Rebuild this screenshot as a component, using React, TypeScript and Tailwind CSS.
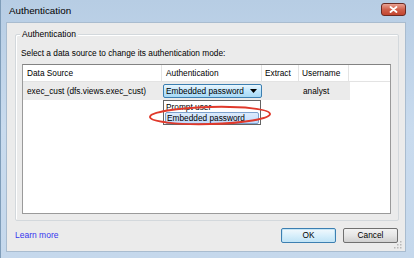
import React from "react";

const font = { fontFamily: '"Liberation Sans", Arial, sans-serif' };

function Grip() {
  return (
    <svg width="8" height="8" viewBox="0 0 8 8" className="absolute right-[3px] bottom-[2px]">
      {[
        [6, 6], [6, 3], [3, 6], [6, 0], [3, 3], [0, 6],
      ].map(([x, y], i) => (
        <rect key={i} x={x} y={y} width="1.5" height="1.5" fill="#b8b8b8" />
      ))}
    </svg>
  );
}

export default function App() {
  return (
    <div className="w-[414px] h-[258px] bg-[#dfe9f3] overflow-hidden relative whitespace-nowrap" style={font}>
      {/* window frame */}
      <div className="w-[414px] h-[258px] flex flex-col bg-gradient-to-b from-[#b7cde4] via-[#c9dbee] to-[#c5d8ec] border-l border-[#7f9db9]">
        {/* title bar */}
        <div className="h-[22px] flex items-center justify-between pl-[8px] pr-[8px]">
          <span className="text-[9.8px] text-black">Authentication</span>
          <div className="w-[25px] h-[13px] mt-[-4px] rounded-[3px] border border-[#6b2a22] bg-gradient-to-b from-[#e8a193] via-[#d0604b] to-[#c2452f] flex items-center justify-center">
            <svg width="9" height="7" viewBox="0 0 9 7">
              <path d="M1.5 1 L7.5 6 M7.5 1 L1.5 6" stroke="#fff" strokeWidth="1.8" strokeLinecap="round" />
            </svg>
          </div>
        </div>
        {/* client area */}
        <div className="relative ml-[5px] mr-[8px] h-[230px] bg-[#ebebeb] border border-[#a9bccf] flex flex-col">
          {/* group box */}
          <div className="relative mt-[11px] ml-[8px] mr-[6px] h-[187px] border border-[#d3d8dc] rounded-[2px] shadow-[inset_1px_1px_0_#fff]">
            <span className="absolute left-[4px] top-[-7px] px-[2px] bg-[#ebebeb] text-[8.5px] leading-[12px] text-black">
              Authentication
            </span>
            <div className="pl-[5px] pt-[12px] text-[8.3px] leading-[12px] text-black">
              Select a data source to change its authentication mode:
            </div>
            {/* table */}
            <div className="relative mt-[5px] ml-[6px] mr-[7px] h-[150px] bg-white border border-[#9a9a9a] border-t-[#828282]">
              <div className="flex h-[17px] text-[8.3px] leading-[17px] text-black border-b border-[#e3e3e3]">
                <div className="w-[139px] pl-[4px] border-r border-[#e3e3e3]">Data Source</div>
                <div className="w-[100px] pl-[4px] border-r border-[#e3e3e3]">Authentication</div>
                <div className="w-[37px] pl-[3px] border-r border-[#e3e3e3]">Extract</div>
                <div className="w-[50px] pl-[3px] border-r border-[#e3e3e3]">Username</div>
              </div>
              <div className="flex h-[18px] w-[327px] bg-[#ebebeb] text-[8.3px] leading-[18px] text-black">
                <div className="w-[140px] pl-[4px]">exec_cust (dfs.views.exec_cust)</div>
                <div className="w-[100px] flex items-center">
                  <div className="w-[99px] h-[14px] flex items-center justify-between pl-[2px] pr-[4px] border border-[#3c7fb1] rounded-[2px] bg-gradient-to-b from-[#eaf6fd] via-[#bee6fd] to-[#a7d9f5] leading-[12px]">
                    <span>Embedded password</span>
                    <svg width="7" height="4" viewBox="0 0 7 4">
                      <path d="M0 0 H7 L3.5 4 Z" fill="#000" />
                    </svg>
                  </div>
                </div>
                <div className="w-[37px]" />
                <div className="w-[50px] pl-[3px]">analyst</div>
              </div>
              {/* dropdown list */}
              <div className="absolute left-[140px] top-[35px] w-[98px] h-[25px] bg-white border border-[#646464] text-[8.3px] leading-[11px] text-black">
                <div className="pl-[2px] pt-[1px] h-[11px]">Prompt user</div>
                <div className="mx-[1px] pl-[1px] h-[12px] border border-[#7da2ce] rounded-[2px] bg-gradient-to-b from-[#dcebfc] to-[#c1dbfc] leading-[10px]">
                  Embedded password
                </div>
              </div>
            </div>
          </div>
          {/* footer */}
          <div className="flex items-center justify-between mt-[7px] ml-[8px] mr-[7px]">
            <span className="text-[8.5px] text-[#3535ee]">Learn more</span>
            <div className="flex gap-[7px]">
              <button className="w-[55px] h-[15px] rounded-[2px] border border-[#3c7fb1] bg-gradient-to-b from-[#f2f9fd] via-[#d8effb] to-[#bfe3f6] text-[8.3px] leading-[13px] text-black shadow-[inset_0_0_0_1px_#c4e5f6]">
                OK
              </button>
              <button className="w-[55px] h-[15px] rounded-[2px] border border-[#707070] bg-gradient-to-b from-[#f2f2f2] via-[#e6e6e6] to-[#d0d0d0] text-[8.3px] leading-[13px] text-black">
                Cancel
              </button>
            </div>
          </div>
          <Grip />
        </div>
      </div>
      {/* red highlight ellipse */}
      <svg className="absolute left-0 top-0 pointer-events-none" width="414" height="258">
        <ellipse cx="210" cy="115.5" rx="60" ry="8.5" fill="none" stroke="#e0392b" strokeWidth="2" transform="rotate(-1.5 210 115.5)" />
      </svg>
    </div>
  );
}
